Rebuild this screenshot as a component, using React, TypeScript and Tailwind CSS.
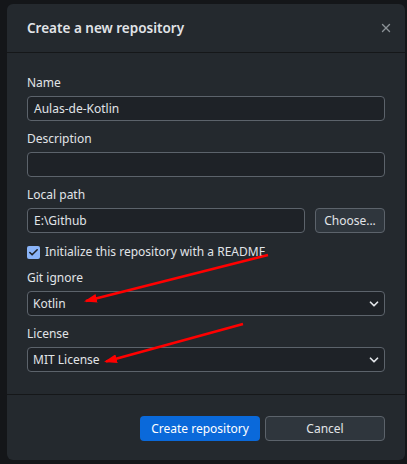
import { ChevronDown, X, Check } from "lucide-react";

function Field({ label, children }: { label: string; children: React.ReactNode }) {
  return (
    <div>
      <div className="text-[12px] leading-[16px] text-[#e1e4e8] mb-[5px]">{label}</div>
      {children}
    </div>
  );
}

function Select({ value }: { value: string }) {
  return (
    <div className="h-[25px] rounded-[4px] border border-[#5c636b] bg-[#1e2227] flex items-center justify-between pl-[5px] pr-[3px] text-[12px] text-[#e1e4e8]">
      <span>{value}</span>
      <ChevronDown size={14} strokeWidth={3} className="text-[#e1e4e8]" />
    </div>
  );
}

export default function App() {
  return (
    <div
      className="relative w-[407px] h-[464px] bg-[#141619] pt-[4px] pl-[7px] overflow-hidden"
      style={{ fontFamily: '"Noto Sans", "Open Sans", sans-serif' }}
    >
      <div className="w-[398px] h-[456px] bg-[#24292e] rounded-[6px] flex flex-col">
        {/* Header */}
        <div className="h-[49px] flex items-center justify-between pl-[20px] pr-[12px] border-b border-[#151719]">
          <h1 className="text-[13.5px] font-semibold text-[#e1e4e8]">
            Create a new repository
          </h1>
          <X size={14} strokeWidth={2.4} className="text-[#8b9196]" />
        </div>

        {/* Body */}
        <div className="flex-1 px-[20px] pt-[22px] flex flex-col gap-[10px]">
          <Field label="Name">
            <div className="h-[25px] rounded-[4px] border border-[#5c636b] bg-[#1e2227] flex items-center px-[6px] text-[12px] text-[#e1e4e8]">
              Aulas-de-Kotlin
            </div>
          </Field>
          <Field label="Description">
            <div className="h-[25px] rounded-[4px] border border-[#5c636b] bg-[#1e2227]" />
          </Field>
          <Field label="Local path">
            <div className="flex gap-[10px]">
              <div className="flex-1 h-[25px] rounded-[4px] border border-[#5c636b] bg-[#1e2227] flex items-center px-[6px] text-[12px] text-[#e1e4e8]">
                E:\Github
              </div>
              <div className="w-[70px] h-[25px] rounded-[4px] border border-[#5c636b] bg-[#2f363d] flex items-center justify-center text-[12px] text-[#e1e4e8]">
                Choose...
              </div>
            </div>
          </Field>
          <div className="h-[16px] flex items-center gap-[5px] mt-[1px]">
            <div className="w-[13px] h-[13px] rounded-[2px] bg-[#8ab4f8] flex items-center justify-center">
              <Check size={11} strokeWidth={3.5} className="text-[#1e2227]" />
            </div>
            <span className="text-[12px] leading-[16px] text-[#e1e4e8]">
              Initialize this repository with a README
            </span>
          </div>
          <Field label="Git ignore">
            <Select value="Kotlin" />
          </Field>
          <Field label="License">
            <Select value="MIT License" />
          </Field>
        </div>

        {/* Footer */}
        <div className="h-[66px] border-t border-[#151719] flex items-center justify-end gap-[5px] pr-[20px] pt-[2px]">
          <div className="w-[120px] h-[25px] rounded-[4px] bg-[#0a69da] flex items-center justify-center text-[12px] text-white">
            Create repository
          </div>
          <div className="w-[120px] h-[25px] rounded-[4px] border border-[#5c636b] bg-[#2f363d] flex items-center justify-center text-[12px] text-[#e1e4e8]">
            Cancel
          </div>
        </div>
      </div>

      {/* Annotation arrows */}
      <svg className="absolute left-0 top-0 pointer-events-none" width="407" height="464">
        <defs>
          <marker id="ah" markerWidth="5" markerHeight="3.4" refX="4.2" refY="1.7" orient="auto">
            <polygon points="0 0, 5 1.7, 0 3.4" fill="#ff0000" />
          </marker>
        </defs>
        <line x1="268" y1="255" x2="86" y2="301" stroke="#ff0000" strokeWidth="2.6" markerEnd="url(#ah)" />
        <line x1="243" y1="324" x2="106" y2="361.5" stroke="#ff0000" strokeWidth="2.6" markerEnd="url(#ah)" />
      </svg>
    </div>
  );
}
